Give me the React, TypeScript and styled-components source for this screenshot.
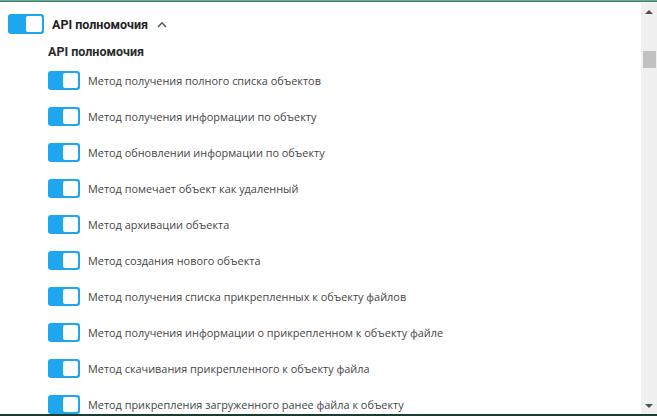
import React from "react";
import styled, { createGlobalStyle } from "styled-components";

const Global = createGlobalStyle`
  html, body { margin: 0; padding: 0; background: #fff; }
  body { font-family: "Open Sans", "Noto Sans", sans-serif; }
`;

const Frame = styled.div`
  width: 657px;
  height: 416px;
  display: flex;
  flex-direction: column;
  box-sizing: border-box;
  border-top: 1px solid #6aa992;
  overflow: hidden;
`;

const TopEdge = styled.div`
  height: 1px;
  background: #3f7d69;
`;

const BottomEdge = styled.div`
  height: 2px;
  background: #1d3a33;
`;

const Body = styled.div`
  flex: 1;
  display: flex;
  min-height: 0;
`;

const Content = styled.div`
  flex: 1;
  overflow: hidden;
  padding: 9px 0 0 8px;
`;

const Track = styled.div`
  width: 16px;
  margin-top: 1px;
  background: #f0f0f0;
  display: flex;
  flex-direction: column;
  align-items: center;
`;

const Arrow = styled.div<{ $down?: boolean }>`
  height: 17px;
  width: 16px;
  display: flex;
  align-items: center;
  justify-content: center;
  &::before {
    content: "";
    width: 0;
    height: 0;
    border-left: 4px solid transparent;
    border-right: 4px solid transparent;
    ${(p) => (p.$down ? "border-top: 4px solid #505050;" : "border-bottom: 4px solid #505050;")}
  }
`;

const ThumbArea = styled.div`
  flex: 1;
  width: 100%;
  display: flex;
  justify-content: center;
  padding-top: 31px;
  box-sizing: border-box;
`;

const Thumb = styled.div`
  width: 13px;
  height: 17px;
  background: #c1c1c1;
`;

const Toggle = styled.span<{ $big?: boolean }>`
  flex: none;
  display: inline-flex;
  align-items: center;
  justify-content: flex-end;
  box-sizing: border-box;
  width: ${(p) => (p.$big ? 36 : 32)}px;
  height: ${(p) => (p.$big ? 20 : 19)}px;
  padding: 0 2px;
  border-radius: 3px;
  background: #1ea6ee;
  &::after {
    content: "";
    width: ${(p) => (p.$big ? 16 : 15)}px;
    height: ${(p) => (p.$big ? 16 : 15)}px;
    border-radius: 2px;
    background: #fff;
  }
`;

const HeaderRow = styled.div`
  display: flex;
  align-items: center;
  gap: 8px;
  height: 26px;
`;

const HeaderTitle = styled.span`
  font-family: Roboto, "Noto Sans", sans-serif;
  font-size: 12.5px;
  font-weight: 700;
  color: #222;
`;

const Chevron = styled.svg`
  margin-left: 1px;
`;

const Section = styled.div`
  padding-left: 40px;
`;

const SubTitle = styled.div`
  font-family: Roboto, "Noto Sans", sans-serif;
  font-size: 12.5px;
  font-weight: 700;
  color: #2a2a2a;
  height: 22px;
  line-height: 22px;
  margin-top: 4px;
`;

const List = styled.div`
  display: flex;
  flex-direction: column;
  margin-top: -1px;
`;

const Row = styled.div`
  display: flex;
  align-items: center;
  gap: 8px;
  height: 36px;
`;

const Label = styled.span`
  font-size: 10.9px;
  color: #454545;
`;

const items = [
  "Метод получения полного списка объектов",
  "Метод получения информации по объекту",
  "Метод обновлении информации по объекту",
  "Метод помечает объект как удаленный",
  "Метод архивации объекта",
  "Метод создания нового объекта",
  "Метод получения списка прикрепленных к объекту файлов",
  "Метод получения информации о прикрепленном к объекту файле",
  "Метод скачивания прикрепленного к объекту файла",
  "Метод прикрепления загруженного ранее файла к объекту",
];

export default function App() {
  return (
    <>
      <Global />
      <Frame>
        <TopEdge />
        <Body>
          <Content>
            <HeaderRow>
              <Toggle $big />
              <HeaderTitle>API полномочия</HeaderTitle>
              <Chevron width="10" height="7" viewBox="0 0 10 7">
                <path d="M1 6 L5 1.8 L9 6" fill="none" stroke="#555" strokeWidth="1.5" />
              </Chevron>
            </HeaderRow>
            <Section>
              <SubTitle>API полномочия</SubTitle>
              <List>
                {items.map((t) => (
                  <Row key={t}>
                    <Toggle />
                    <Label>{t}</Label>
                  </Row>
                ))}
              </List>
            </Section>
          </Content>
          <Track>
            <Arrow />
            <ThumbArea>
              <Thumb />
            </ThumbArea>
            <Arrow $down />
          </Track>
        </Body>
        <BottomEdge />
      </Frame>
    </>
  );
}
